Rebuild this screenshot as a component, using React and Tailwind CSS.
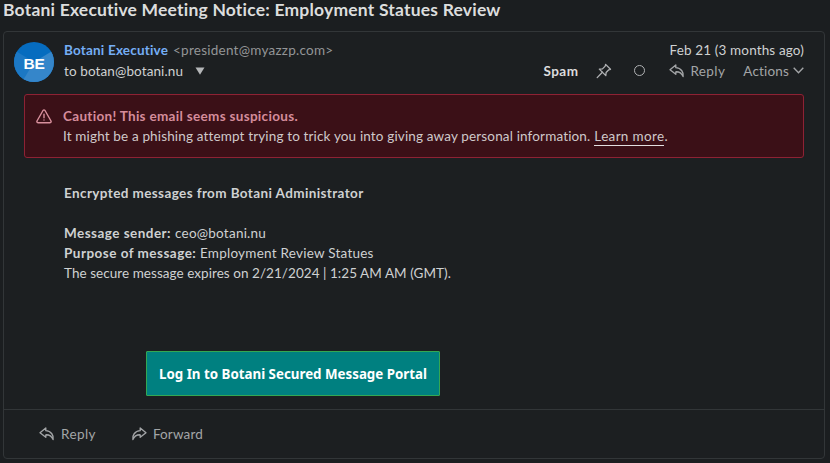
function ReplyIcon({ flip = false }) {
  return (
    <svg viewBox="0 0 16 14" className={`h-[14px] w-4 shrink-0 ${flip ? "-scale-x-100" : ""}`} fill="none" stroke="#a3a5a7" strokeWidth="1.35" strokeLinejoin="round">
      <path d="M6.8 1 L1 5.7 L6.8 10.3 V7.8 C10.3 7.7 12.6 8.9 14.1 12.6 C14.9 8.6 12.3 4 6.8 3.7 Z" />
    </svg>
  );
}

function PinIcon() {
  return (
    <svg viewBox="0 0 16 16" className="h-4 w-4 shrink-0" fill="none" stroke="#b0b2b4" strokeWidth="1.3" strokeLinecap="round" strokeLinejoin="round">
      <path d="M9.6 1.4 L14.5 6.3 L12.8 6.8 L10.1 9.5 L9.8 12.6 L3.3 6.1 L6.5 5.9 L9.2 3.1 Z" />
      <path d="M6.4 9.3 L1.2 14.6" />
    </svg>
  );
}

function Header() {
  return (
    <div className="flex h-[62px] pt-[10px] pl-[10px] pr-5">
      <svg viewBox="0 0 40 40" className="h-10 w-10 shrink-0">
        <defs>
          <clipPath id="avatar">
            <circle cx="20" cy="20" r="20" />
          </clipPath>
        </defs>
        <g clipPath="url(#avatar)">
          <rect width="40" height="40" fill="#066cbf" />
          <path d="M0 8 L20 20 L10 40 H0 Z" fill="#1c78c4" />
          <path d="M40 8 L20 20 L8 40 H40 Z" fill="#3586ca" />
        </g>
        <text x="20.2" y="26.6" textAnchor="middle" fill="#fff" className="font-['Liberation_Sans',sans-serif] text-[15.5px] font-bold">BE</text>
      </svg>
      <div className="ml-[10px] flex flex-1 flex-col">
        <div className="flex h-[21px] items-center -mt-[3px]">
          <span className="w-[109px] font-bold tracking-[0.19px] text-[#75aef5]">Botani Executive</span>
          <span className="tracking-[0.25px] text-[#939597]">&lt;president@myazzp.com&gt;</span>
          <span className="ml-auto tracking-[0.14px]">Feb 21 (3 months ago)</span>
        </div>
        <div className="flex h-[21px] items-center">
          <span className="w-[131px] tracking-[0.11px]">to botan@botani.nu</span>
          <svg viewBox="0 0 10 8" className="h-2 w-[10px]" fill="#b4b6b8">
            <path d="M0.5 0.5 H9.5 L5 7.8 Z" />
          </svg>
          <div className="ml-auto flex items-center text-[#a3a5a7]">
            <span className="mr-[18px] font-bold tracking-[0.45px] text-[#dcddde]">Spam</span>
            <PinIcon />
            <span className="mr-[24px] ml-[22px] h-[11px] w-[11px] rounded-full border border-[#b0b2b4]" />
            <ReplyIcon />
            <span className="mr-[18px] ml-[5px] tracking-[0.4px]">Reply</span>
            <span className="tracking-[0.17px]">Actions</span>
            <svg viewBox="0 0 11 7" className="ml-[4px] h-[7px] w-[11px]" fill="none" stroke="#a3a5a7" strokeWidth="1.4">
              <path d="M0.7 0.8 L5.5 5.7 L10.3 0.8" />
            </svg>
          </div>
        </div>
      </div>
    </div>
  );
}

function Warning() {
  return (
    <div className="mr-5 ml-5 flex h-16 rounded-[3px] border border-[#8e2234] bg-[#3b1017] pt-[11px] pl-[11px]">
      <svg viewBox="0 0 16 15" className="mt-[3px] h-[15px] w-4 shrink-0" fill="none" stroke="#d9909d" strokeWidth="1.4" strokeLinejoin="round" strokeLinecap="round">
        <path d="M7 1.5 Q8 0.3 9 1.5 L15 12 Q15.5 13.6 14 13.7 H2 Q0.5 13.6 1 12 Z" />
        <path d="M8 5.2 V8.8 M8 10.9 V11" />
      </svg>
      <div className="ml-[11px] leading-5">
        <div className="font-bold tracking-[0.31px] text-[#d58c9b]">Caution! This email seems suspicious.</div>
        <div className="flex tracking-[0.15px] text-[#cfc9ca]">
          <span className="mr-[4px]">It might be a phishing attempt trying to trick you into giving away personal information.</span>
          <span className="h-5 border-b border-[#e3dfe0] tracking-[0.33px]">Learn more</span>.
        </div>
      </div>
    </div>
  );
}

export default function App() {
  return (
    <div className="h-[463px] w-[830px] overflow-hidden bg-[#1b1e20] font-['Lato',sans-serif] text-[13.5px] leading-5 text-[#cfd1d2]">
      <h1 className="h-[31px] pl-[3px] text-[17.5px] leading-[20px] font-bold tracking-[0.2px] whitespace-nowrap text-[#dcdddd]">
        Botani Executive Meeting Notice: Employment Statues Review
      </h1>
      <div className="ml-[3px] h-[428px] w-[822px] rounded-[4px] border border-[#323638] bg-[#1c1f21]">
        <Header />
        <Warning />
        <div className="flex h-[252px] flex-col border-b border-[#323638] pt-[25px] pl-[60px]">
          <div className="h-10 font-bold tracking-[0.39px]">Encrypted messages from Botani Administrator</div>
          <div className="flex">
            <b className="w-[111px] tracking-[0.46px]">Message sender:</b>
            <span className="tracking-[0.23px]">ceo@botani.nu</span>
          </div>
          <div className="flex">
            <b className="w-[136px] tracking-[0.48px]">Purpose of message:</b>
            <span className="tracking-[0.24px]">Employment Review Statues</span>
          </div>
          <div className="tracking-[0.05px]">The secure message expires on 2/21/2024 | 1:25 AM AM (GMT).</div>
          <div className="mt-[68px] ml-[82px] flex h-[45px] w-[294px] items-center justify-center rounded-[1px] border border-[#34a853] bg-[#008080] font-['Noto_Sans',sans-serif] text-[13.33px] font-bold whitespace-nowrap text-white">
            Log In to Botani Secured Message Portal
          </div>
        </div>
        <div className="flex h-[47px] items-center pl-[35px] text-[#a3a5a7]">
          <ReplyIcon />
          <span className="mr-[35px] ml-[6px] tracking-[0.4px]">Reply</span>
          <ReplyIcon flip />
          <span className="ml-[6px] tracking-[0.14px]">Forward</span>
        </div>
      </div>
    </div>
  );
}
